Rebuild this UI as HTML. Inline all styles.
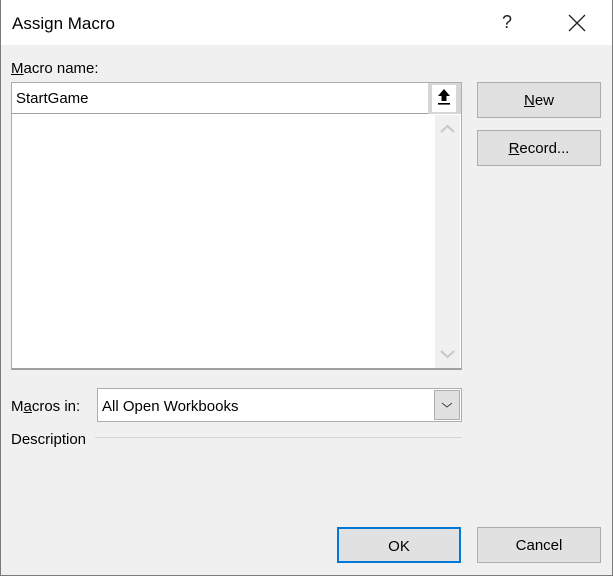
<!DOCTYPE html>
<html><head><meta charset="utf-8"><style>
*{box-sizing:border-box;margin:0;padding:0}
body{width:613px;height:576px;overflow:hidden;background:#f0f0f0;font-family:"Liberation Sans",sans-serif;font-size:15px;color:#000;position:relative}
.abs{position:absolute}
.win{left:0;top:0;width:613px;height:576px;border:1px solid #7a7a7a;border-top:none}
.title{left:1px;top:0;width:611px;height:45px;background:#fff}
.btn{background:#e1e1e1;border:1px solid #adadad;text-align:center;font-size:15px}
u{text-decoration:underline}
</style></head><body>
<div class="abs win"></div>
<div class="abs title"></div>
<div class="abs" style="left:12px;top:14px;font-size:17px">Assign Macro</div>
<div class="abs" style="left:502px;top:12px;font-size:18px;color:#222">?</div>
<svg class="abs" style="left:568px;top:14px" width="18" height="18"><path d="M1 1L17 17M17 1L1 17" stroke="#222" stroke-width="1.3"/></svg>

<div class="abs" style="left:11px;top:60px"><u>M</u>acro name:</div>
<div class="abs" style="left:11px;top:82px;width:451px;height:33px;background:#fff;border:1px solid #adadad;border-bottom:2px solid #a0a0a0"></div>
<div class="abs" style="left:16px;top:90px">StartGame</div>
<div class="abs" style="left:428px;top:83px;width:33px;height:31px;background:#d6d6d6"></div>
<div class="abs" style="left:432px;top:85px;width:24px;height:27px;background:#fff"></div>
<svg class="abs" style="left:437px;top:88px" width="14" height="18"><path d="M7 1L1 8H4.5V13H9.5V8H13Z" fill="#000"/><rect x="1" y="15" width="12" height="1.6" fill="#000"/></svg>

<div class="abs" style="left:11px;top:114px;width:451px;height:256px;background:#fff;border:1px solid #adadad;border-top:none;border-bottom:2px solid #a0a0a0"></div>
<div class="abs" style="left:435px;top:115px;width:25px;height:253px;background:#f0f0f0"></div>
<svg class="abs" style="left:440px;top:124px" width="15" height="10"><path d="M1 8L7.5 2L14 8" stroke="#c8c8c8" stroke-width="2" fill="none"/></svg>
<svg class="abs" style="left:440px;top:349px" width="15" height="10"><path d="M1 2L7.5 8L14 2" stroke="#c8c8c8" stroke-width="2" fill="none"/></svg>

<div class="abs btn" style="left:477px;top:82px;width:124px;height:36px;line-height:36px"><u>N</u>ew</div>
<div class="abs btn" style="left:477px;top:130px;width:124px;height:36px;line-height:36px"><u>R</u>ecord...</div>

<div class="abs" style="left:11px;top:398px">M<u>a</u>cros in:</div>
<div class="abs" style="left:97px;top:388px;width:365px;height:34px;background:#fff;border:1px solid #adadad"></div>
<div class="abs" style="left:102px;top:398px">All Open Workbooks</div>
<div class="abs" style="left:434px;top:390px;width:26px;height:30px;background:#e1e1e1;border:1px solid #adadad"></div>
<svg class="abs" style="left:441px;top:401px" width="12" height="8"><path d="M1 2L6 6L11 2" stroke="#444" stroke-width="1" fill="none"/></svg>

<div class="abs" style="left:11px;top:431px">Description</div>
<div class="abs" style="left:95px;top:437px;width:367px;height:1px;background:#d5d5d5"></div>

<div class="abs btn" style="left:337px;top:527px;width:124px;height:36px;line-height:35px;border:2px solid #0078d7">OK</div>
<div class="abs btn" style="left:477px;top:527px;width:124px;height:36px;line-height:36px">Cancel</div>
</body></html>
